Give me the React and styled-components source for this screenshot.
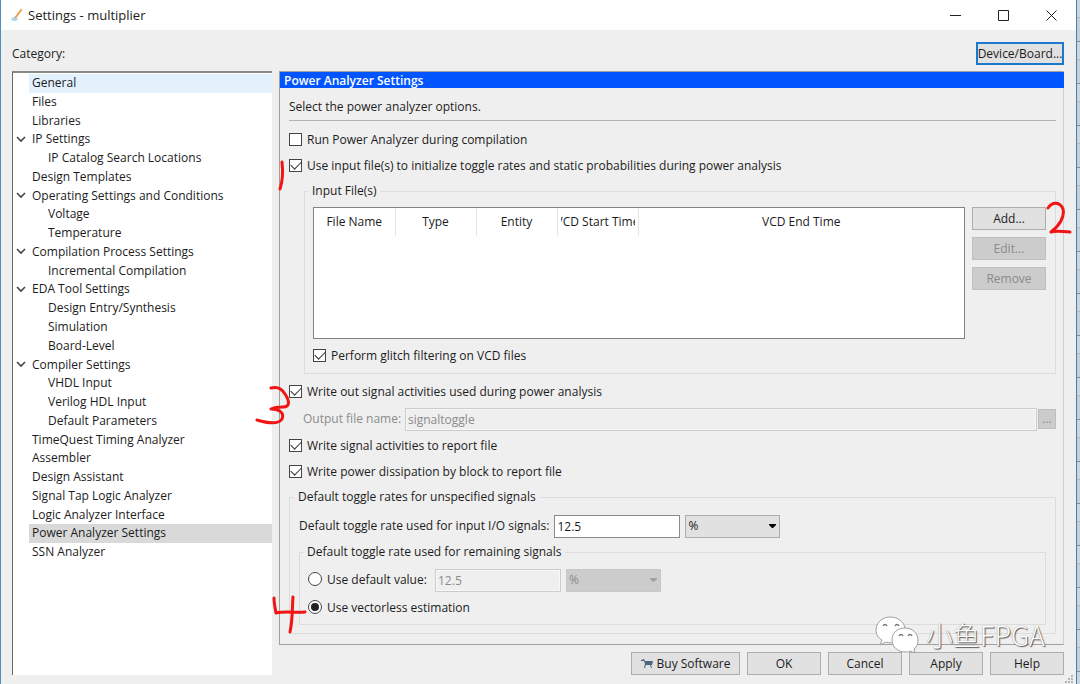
import React, { useState } from "react";
import styled, { createGlobalStyle } from "styled-components";

const GlobalStyle = createGlobalStyle`
  * {
    box-sizing: border-box;
  }
  body {
    margin: 0;
    background: #cdcdcd;
    color: #1c1c1c;
    font-family: "Open Sans", "Noto Sans CJK SC", sans-serif;
    font-size: 12px;
    line-height: 18px;
  }
  button, input, select {
    font: inherit;
    color: inherit;
    margin: 0;
  }
`;

const Desktop = styled.div`
  display: flex;
  min-height: 100vh;
`;

const Backdrop = styled.div`
  flex: 0 0 3px;
  background: repeating-linear-gradient(#d4d4d4 0 17px, #b4bcc2 17px 18px, #cdcdcd 18px 41px, #8c8c8c 41px 42px);
`;

const Window = styled.div`
  position: relative;
  flex: 1;
  min-width: 0;
  display: flex;
  flex-direction: column;
  background: #efefef;
  border-left: 1px solid #4f8fbc;
  border-right: 1px solid #2e86cc;
`;

const TitleBar = styled.header`
  display: flex;
  align-items: center;
  height: 30px;
  padding: 0 1px 0 10px;
  background: #fff;
`;

const Title = styled.h1`
  flex: 1;
  margin: 0 0 0 5px;
  font-size: 13px;
  font-weight: 400;
`;

const CaptionButton = styled.button`
  display: flex;
  align-items: center;
  justify-content: center;
  width: 48px;
  height: 30px;
  padding: 0;
  border: 0;
  background: none;
`;

const TopRow = styled.div`
  display: flex;
  justify-content: space-between;
  align-items: center;
  height: 41px;
  padding: 6px 12px 0 11px;
`;

const Button = styled.button`
  display: flex;
  align-items: center;
  justify-content: center;
  gap: 4px;
  width: ${({ $wide }) => ($wide ? "109px" : "74px")};
  height: 23px;
  padding: 0;
  border: 1px solid #adadad;
  background: #e1e1e1;

  &:disabled {
    border-color: #bfbfbf;
    background: #cccccc;
    color: #8b8b8b;
  }
`;

const DeviceButton = styled(Button)`
  width: 88px;
  border: 2px solid #1b78cc;
`;

const Body = styled.div`
  flex: 1;
  display: grid;
  grid-template-columns: 260px minmax(0, 1fr);
  column-gap: 7px;
  padding: 0 12px 9px 11px;
`;

const Tree = styled.ul`
  margin: 0;
  padding: 1px 0 0;
  list-style: none;
  background: #fff;
  border-top: 2px solid #8a8a85;
  border-left: 1px solid #6e6656;
`;

const TreeRows = styled.div`
  display: grid;
  grid-auto-rows: 1fr;
  height: 488px;
`;

const TreeItem = styled.li`
  display: flex;
  align-items: center;
  padding-left: ${({ $level }) => ($level ? "19px" : "0")};
`;

const Twisty = styled.span`
  display: flex;
  justify-content: center;
  width: 16px;
`;

const TreeLink = styled.a`
  flex: 1;
  align-self: stretch;
  padding-left: ${({ $level }) => ($level ? "0" : "3px")};
  color: inherit;
  text-decoration: none;
  white-space: nowrap;
  background: ${({ $state }) => ($state === "selected" ? "#d9d9d9" : $state === "hover" ? "#e3f1fd" : "none")};
`;

const RightColumn = styled.div`
  display: flex;
  flex-direction: column;
`;

const Panel = styled.main`
  flex: 1;
  border: 1px solid #a0a0a0;
  border-right-color: #cfcfcf;
`;

const PanelTitle = styled.h2`
  margin: 0 -1px 0 0;
  height: 16px;
  padding-left: 4px;
  background: #0055ff;
  color: #fff;
  font-size: 12px;
  font-weight: 600;
  line-height: 17px;
`;

const PanelBody = styled.div`
  padding: 10px 7px 9px 9px;
`;

const Intro = styled.p`
  margin: 0 0 10px;
  padding-bottom: 4px;
  border-bottom: 1px solid #b4b4b4;
`;

const CheckRow = styled.label`
  display: flex;
  align-items: center;
  gap: 5px;
  height: 18px;
  margin-top: ${({ $spaced }) => ($spaced ? "8px" : "0")};
`;

const Mark = styled.input`
  appearance: none;
  display: flex;
  align-items: center;
  justify-content: center;
  width: 13px;
  height: 13px;
  margin-bottom: 2px;
  border: 1px solid #444;
  background: #fff;
`;

const Check = styled(Mark)`
  &:checked::before {
    content: "";
    width: 9px;
    height: 5px;
    margin-bottom: 3px;
    border: solid #333;
    border-width: 0 0 1px 1px;
    transform: rotate(-45deg);
  }
`;

const Radio = styled(Mark)`
  width: 14px;
  height: 14px;
  border-radius: 50%;

  &:checked::before {
    content: "";
    width: 8px;
    height: 8px;
    border-radius: 50%;
    background: #222;
  }
`;

const RateOption = styled(CheckRow)`
  flex: 0 0 122px;
`;

const Group = styled.fieldset`
  min-width: 0;
  margin: 0;
  padding: 0 8px;
  border: 1px solid #dcdcdc;

  legend {
    margin-left: -5px;
    padding: 0 4px;
  }
`;

const InputFiles = styled(Group)`
  margin: 7px 0 9px 15px;
  padding-bottom: 8px;
`;

const ToggleRates = styled(Group)`
  margin-top: 7px;
  padding: 0 9px 8px;
`;

const Remaining = styled(Group)`
  padding-bottom: 7px;
`;

const FilesArea = styled.div`
  display: flex;
  gap: 7px;
  margin: 7px 1px 8px 0;
`;

const TableBox = styled.div`
  flex: 1;
  min-width: 0;
  height: 132px;
  border: 1px solid #828282;
  background: #fff;
`;

const FileTable = styled.table`
  width: 100%;
  table-layout: fixed;
  border-collapse: collapse;
`;

const HeaderCell = styled.th`
  width: ${({ $stretch }) => ($stretch ? "auto" : "81px")};
  height: 28px;
  padding: 0 3px;
  border-right: ${({ $stretch }) => ($stretch ? "0" : "1px solid #e5e5e5")};
  font-weight: 400;
`;

const HeaderText = styled.div`
  display: flex;
  justify-content: center;
  overflow: hidden;
  white-space: nowrap;
`;

const ButtonStack = styled.div`
  display: flex;
  flex-direction: column;
  gap: 7px;
`;

const FieldRow = styled.div`
  display: flex;
  align-items: center;
  gap: 5px;
  height: ${({ $height }) => $height}px;
  color: ${({ $disabled }) => ($disabled ? "#8b8b8b" : "inherit")};
`;

const OutputRow = styled(FieldRow)`
  gap: 1px;
  padding-left: 14px;
`;

const RateRow = styled(FieldRow)`
  margin-top: 3px;
`;

const FieldLabel = styled.label`
  flex: 0 0 ${({ $width }) => $width}px;
  white-space: nowrap;
`;

const TextBox = styled.input`
  flex: ${({ $grow }) => ($grow ? "1" : "0 0 126px")};
  min-width: 0;
  height: 23px;
  padding: 0 2px;
  border: 1px solid #8a8a8a;
  background: #fff;

  &:disabled {
    border-color: #cccccc;
    background: #efefef;
    box-shadow: inset 0 0 0 1px #f8f8f8;
    color: #8b8b8b;
  }
`;

const BrowseButton = styled(Button)`
  width: 18px;
  height: 20px;
  line-height: 12px;
`;

const SelectBox = styled.div`
  position: relative;
  width: 95px;
  color: ${({ $disabled }) => ($disabled ? "#a2a2a2" : "#000")};

  svg {
    position: absolute;
    right: 4px;
    top: 9px;
    pointer-events: none;
  }
`;

const Select = styled.select`
  appearance: none;
  display: block;
  width: 100%;
  height: 23px;
  padding: 0 2px;
  border: 1px solid #adadad;
  border-radius: 0;
  background: #e1e1e1;
  color: #1c1c1c;

  &:disabled {
    border-color: #c8c8c8;
    background: #cccccc;
    color: #8b8b8b;
    opacity: 1;
  }
`;

const Footer = styled.footer`
  display: flex;
  justify-content: flex-end;
  gap: 7px;
  padding-top: 7px;
`;

const Annotation = styled.svg`
  position: absolute;
  top: ${({ $top }) => $top}px;
  left: ${({ $left }) => ($left === undefined ? "auto" : $left + "px")};
  right: ${({ $right }) => ($right === undefined ? "auto" : $right + "px")};
  fill: none;
  stroke: #f01414;
  stroke-width: 3;
  stroke-linecap: round;
  stroke-linejoin: round;
  pointer-events: none;
`;

const Watermark = styled.div`
  position: absolute;
  right: 31px;
  bottom: 29px;
  display: flex;
  align-items: center;
  gap: 7px;
  color: #fff;
  font-family: "Noto Sans CJK SC", sans-serif;
  font-size: 27px;
  font-weight: 300;
  line-height: 40px;
  text-shadow: 1px 1px 1px #555, 0 0 1px #888;
  pointer-events: none;
`;

const Grip = styled.svg`
  position: absolute;
  right: 2px;
  bottom: 0;
`;

const categories = [
  { name: "General", state: "hover" },
  { name: "Files" },
  { name: "Libraries" },
  { name: "IP Settings", open: true },
  { name: "IP Catalog Search Locations", level: 1 },
  { name: "Design Templates" },
  { name: "Operating Settings and Conditions", open: true },
  { name: "Voltage", level: 1 },
  { name: "Temperature", level: 1 },
  { name: "Compilation Process Settings", open: true },
  { name: "Incremental Compilation", level: 1 },
  { name: "EDA Tool Settings", open: true },
  { name: "Design Entry/Synthesis", level: 1 },
  { name: "Simulation", level: 1 },
  { name: "Board-Level", level: 1 },
  { name: "Compiler Settings", open: true },
  { name: "VHDL Input", level: 1 },
  { name: "Verilog HDL Input", level: 1 },
  { name: "Default Parameters", level: 1 },
  { name: "TimeQuest Timing Analyzer" },
  { name: "Assembler" },
  { name: "Design Assistant" },
  { name: "Signal Tap Logic Analyzer" },
  { name: "Logic Analyzer Interface" },
  { name: "Power Analyzer Settings", state: "selected" },
  { name: "SSN Analyzer" },
];

const CheckOption = ({ label, checked, spaced }) => {
  const [on, setOn] = useState(!!checked);
  return (
    <CheckRow $spaced={spaced}>
      <Check type="checkbox" checked={on} onChange={(e) => setOn(e.target.checked)} />
      {label}
    </CheckRow>
  );
};

const UnitSelect = ({ label, disabled }) => (
  <SelectBox $disabled={disabled}>
    <Select aria-label={label} disabled={disabled} defaultValue="%">
      <option>%</option>
      <option>transitions/s</option>
    </Select>
    <svg width="7" height="4" viewBox="0 0 7 4">
      <path d="M0 0h7v1L4 4H3L0 1z" fill="currentColor" />
    </svg>
  </SelectBox>
);

const CategoryTree = () => (
  <Tree>
    <TreeRows>
      {categories.map((item) => (
        <TreeItem key={item.name} $level={item.level}>
          <Twisty>
            {item.open && (
              <svg width="10" height="8" viewBox="0 0 10 8">
                <path d="M1 1l4 4 4-4" fill="none" stroke="#444" strokeWidth="1.6" />
              </svg>
            )}
          </Twisty>
          <TreeLink href="#" $level={item.level} $state={item.state}>
            {item.name}
          </TreeLink>
        </TreeItem>
      ))}
    </TreeRows>
  </Tree>
);

const InputFileTable = () => (
  <TableBox>
    <FileTable>
      <thead>
        <tr>
          {["File Name", "Type", "Entity", "VCD Start Time"].map((name) => (
            <HeaderCell key={name}>
              <HeaderText>{name}</HeaderText>
            </HeaderCell>
          ))}
          <HeaderCell $stretch>
            <HeaderText>VCD End Time</HeaderText>
          </HeaderCell>
        </tr>
      </thead>
      <tbody />
    </FileTable>
  </TableBox>
);

const PowerAnalyzerPanel = () => {
  const [mode, setMode] = useState("vectorless");
  return (
    <Panel>
      <PanelTitle>Power Analyzer Settings</PanelTitle>
      <PanelBody>
        <Intro>Select the power analyzer options.</Intro>
        <CheckOption label="Run Power Analyzer during compilation" />
        <CheckOption spaced checked label="Use input file(s) to initialize toggle rates and static probabilities during power analysis" />

        <InputFiles>
          <legend>Input File(s)</legend>
          <FilesArea>
            <InputFileTable />
            <ButtonStack>
              <Button type="button">Add...</Button>
              <Button type="button" disabled>Edit...</Button>
              <Button type="button" disabled>Remove</Button>
            </ButtonStack>
          </FilesArea>
          <CheckOption checked label="Perform glitch filtering on VCD files" />
        </InputFiles>

        <CheckOption checked label="Write out signal activities used during power analysis" />
        <OutputRow $height={36} $disabled>
          <FieldLabel htmlFor="output-file" $width={101}>Output file name:</FieldLabel>
          <TextBox id="output-file" $grow disabled defaultValue="signaltoggle" />
          <BrowseButton type="button" aria-label="Browse" disabled>...</BrowseButton>
        </OutputRow>
        <CheckOption checked label="Write signal activities to report file" />
        <CheckOption spaced checked label="Write power dissipation by block to report file" />

        <ToggleRates>
          <legend>Default toggle rates for unspecified signals</legend>
          <RateRow $height={34}>
            <FieldLabel htmlFor="io-rate" $width={250}>Default toggle rate used for input I/O signals:</FieldLabel>
            <TextBox id="io-rate" defaultValue="12.5" />
            <UnitSelect label="Input rate unit" />
          </RateRow>
          <Remaining>
            <legend>Default toggle rate used for remaining signals</legend>
            <FieldRow $height={38}>
              <RateOption>
                <Radio type="radio" name="mode" checked={mode === "default"} onChange={() => setMode("default")} />
                Use default value:
              </RateOption>
              <TextBox aria-label="Default value" disabled={mode !== "default"} defaultValue="12.5" />
              <UnitSelect label="Default value unit" disabled={mode !== "default"} />
            </FieldRow>
            <CheckRow>
              <Radio type="radio" name="mode" checked={mode === "vectorless"} onChange={() => setMode("vectorless")} />
              Use vectorless estimation
            </CheckRow>
          </Remaining>
        </ToggleRates>
      </PanelBody>
    </Panel>
  );
};

const Annotations = () => (
  <>
    <Annotation $top={158} $left={276} width="10" height="34" aria-label="1">
      <path d="M5 4c1 9 1 18-2 27" />
    </Annotation>
    <Annotation $top={200} $right={4} width="26" height="36" aria-label="2">
      <path d="M2 8c5-7 12-6 15 1 2 8-4 17-12 23 6-2 12 0 19 0" />
    </Annotation>
    <Annotation $top={384} $left={254} width="38" height="42" aria-label="3">
      <path d="M16 4c7-2 11 1 14 6 4 6 6 13-2 13-4 0-8 0-12 2 7 0 14 3 11 10-4 6-15 4-25 1" />
    </Annotation>
    <Annotation $top={594} $left={270} width="36" height="42" aria-label="4">
      <path d="M3 4c0 5 1 10 2 15 9-2 19 0 29-1M22 3c-1 11 0 21-3 35" />
    </Annotation>
  </>
);

const App = () => (
  <Desktop>
    <GlobalStyle />
    <Window>
      <TitleBar>
        <svg width="12" height="14" viewBox="0 0 12 14">
          <path d="M0 12c1-3 3-4 5-3l2 3-3 1z" fill="#a9d3ea" />
          <path d="M4 9l6-8 1 1-6 8z" fill="#f3a24a" stroke="#e08b34" strokeWidth=".5" />
        </svg>
        <Title>Settings - multiplier</Title>
        <CaptionButton type="button" aria-label="Minimize">
          <svg width="11" height="11"><path d="M0 5.5h11" stroke="#222" /></svg>
        </CaptionButton>
        <CaptionButton type="button" aria-label="Maximize">
          <svg width="11" height="11"><path d="M.5.5h10v10H.5z" fill="none" stroke="#222" /></svg>
        </CaptionButton>
        <CaptionButton type="button" aria-label="Close">
          <svg width="11" height="11"><path d="M.5.5l10 10m0-10l-10 10" stroke="#222" /></svg>
        </CaptionButton>
      </TitleBar>

      <TopRow>
        <span>Category:</span>
        <DeviceButton type="button">Device/Board...</DeviceButton>
      </TopRow>

      <Body>
        <CategoryTree />
        <RightColumn>
          <PowerAnalyzerPanel />
          <Footer>
            <Button type="button" $wide>
              <svg width="12" height="10" viewBox="0 0 12 10" fill="#4f6680">
                <path d="M0 1l3-1 1 2h8l-1 4h-1l1 3h-1L9 6H5L4 9H3l1-4-1-3H0z" />
              </svg>
              Buy Software
            </Button>
            <Button type="button">OK</Button>
            <Button type="button">Cancel</Button>
            <Button type="button">Apply</Button>
            <Button type="button">Help</Button>
          </Footer>
        </RightColumn>
      </Body>

      <Annotations />
      <Watermark>
        <svg width="44" height="38" viewBox="0 0 44 38" fill="#fff" stroke="#a0a0a0" strokeWidth="1">
          <path d="M15 1C7 1 1 7 1 14c0 4 2 8 6 10l-2 5 6-3c3 1 5 1 7 0l12-14C29 6 23 1 15 1z" />
          <path d="M30 12c-8 0-13 5-13 12s6 12 13 12c2 0 3 0 5-1l5 2-1-4c3-2 4-5 4-9 0-7-6-12-13-12z" />
          <path d="M8 10c1-2 3-2 4 0M20 10c1-2 3-2 4 0M24 20c1-2 3-2 4 0M33 20c1-2 3-2 4 0" fill="none" stroke="#777" strokeWidth="1.4" />
        </svg>
        小鱼FPGA
      </Watermark>
      <Grip width="9" height="9" fill="#b5b5b5">
        <path d="M6 0h2v2H6zM3 3h2v2H3zM6 3h2v2H6zM0 6h2v2H0zM3 6h2v2H3zM6 6h2v2H6z" />
      </Grip>
    </Window>
    <Backdrop />
  </Desktop>
);

export default App;
